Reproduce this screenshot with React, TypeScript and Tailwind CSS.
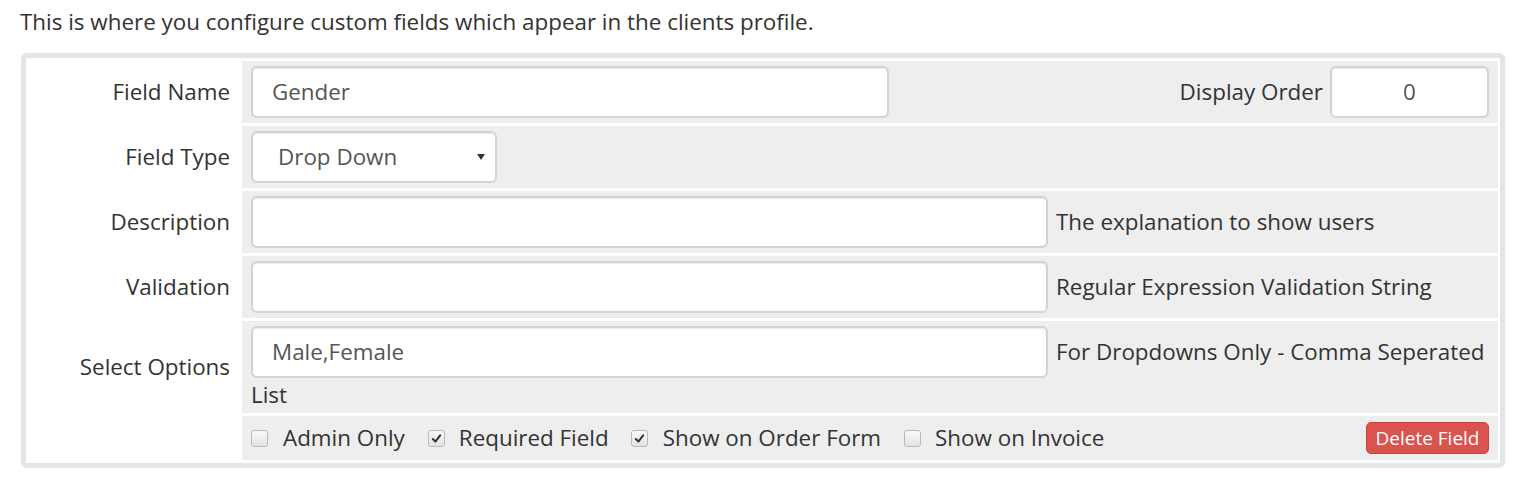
function Check({ checked }: { checked?: boolean }) {
  return (
    <span className="inline-flex items-center justify-center w-[17px] h-[17px] rounded-[3px] border border-[#b9b9b9] bg-gradient-to-b from-[#fafafa] to-[#e2e2e2] shrink-0">
      {checked && (
        <svg width="11" height="11" viewBox="0 0 12 12">
          <path d="M2 6.5 L4.8 9.3 L10 2.5" fill="none" stroke="#333" strokeWidth="2.2" strokeLinecap="round" strokeLinejoin="round" />
        </svg>
      )}
    </span>
  );
}

function Row({ label, h, children }: { label: string; h: string; children?: React.ReactNode }) {
  return (
    <div className="flex">
      <div className="w-[216px] flex items-center justify-end pr-3 shrink-0">{label}</div>
      <div className={`flex-1 bg-[#eeeeee] px-[9px] ${h}`}>{children}</div>
    </div>
  );
}

const input =
  "h-[52px] bg-white border-2 border-[#d3d3d3] rounded-[6px] shadow-[inset_0_1px_1px_rgba(0,0,0,0.08)] flex items-center text-[#555]";

export default function App() {
  return (
    <div className="w-full h-[491px] bg-white text-[#333] text-[22.4px] leading-[30px] font-['Open_Sans',sans-serif]">
      <p className="pl-5 pt-[7px] mb-[16px]">
        This is where you configure custom fields which appear in the clients profile.
      </p>
      <div className="ml-[21px] w-[1484px] border-[5px] border-[#e2e6e9] rounded-[6px] pt-[3px] pb-[3px] pr-[2px] flex flex-col gap-[3px]">
        <Row label="Field Name" h="h-[62px] flex items-center justify-between">
          <div className={`${input} w-[638px] pl-[19px]`}>Gender</div>
          <div className="flex items-center gap-[7px]">
            <span>Display Order</span>
            <div className={`${input} w-[159px] justify-center`}>0</div>
          </div>
        </Row>
        <Row label="Field Type" h="h-[62px] flex items-center">
          <div className={`${input} w-[246px] pl-[25px] pr-[10px] justify-between`}>
            <span>Drop Down</span>
            <svg width="8" height="6" viewBox="0 0 8 6">
              <path d="M0 0 H8 L4 6 Z" fill="#333" />
            </svg>
          </div>
        </Row>
        <Row label="Description" h="h-[62px] flex items-center gap-[8px]">
          <div className={`${input} w-[797px]`} />
          <span>The explanation to show users</span>
        </Row>
        <Row label="Validation" h="h-[62px] flex items-center gap-[8px]">
          <div className={`${input} w-[797px]`} />
          <span>Regular Expression Validation String</span>
        </Row>
        <Row label="Select Options" h="h-[92px] pt-[5px]">
          <div className="flex items-center gap-[8px]">
            <div className={`${input} w-[797px] pl-[19px]`}>Male,Female</div>
            <span className="whitespace-nowrap">For Dropdowns Only - Comma Seperated</span>
          </div>
          <div className="mt-[2px]">List</div>
        </Row>
        <Row label="" h="h-[44px] flex items-center justify-between">
          <div className="flex items-center">
            <Check />
            <span className="ml-[15px] mr-[23px]">Admin Only</span>
            <Check checked />
            <span className="ml-[14px] mr-[22px]">Required Field</span>
            <Check checked />
            <span className="ml-[15px] mr-[23px]">Show on Order Form</span>
            <Check />
            <span className="ml-[14px]">Show on Invoice</span>
          </div>
          <button className="h-[32px] w-[123px] bg-[#d9534f] border border-[#d43f3a] rounded-[5px] text-white text-[19px] leading-none">
            Delete Field
          </button>
        </Row>
      </div>
    </div>
  );
}
